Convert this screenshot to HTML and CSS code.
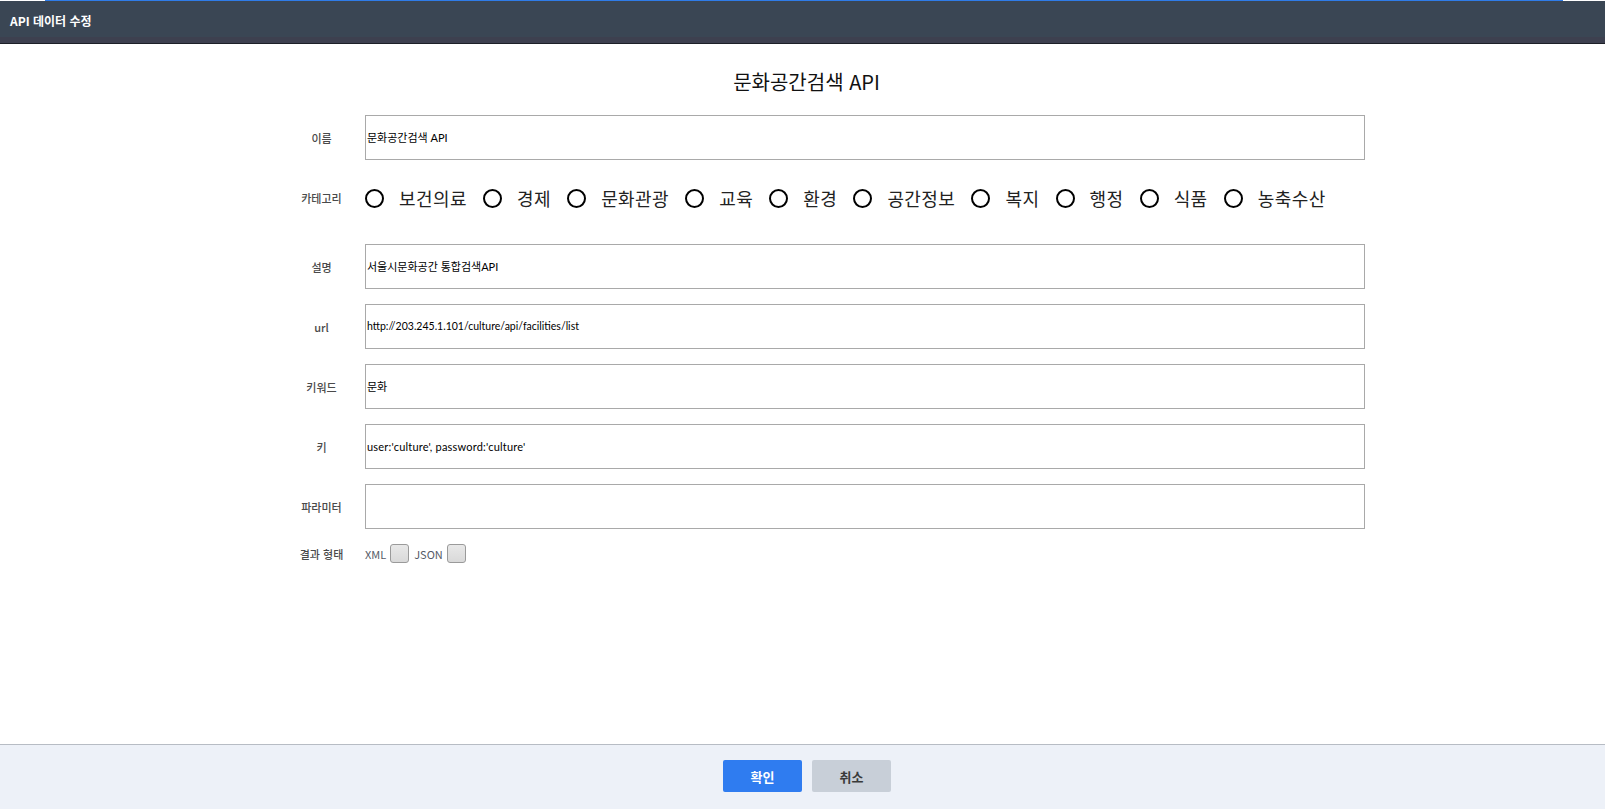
FILE: index.html
```html
<!DOCTYPE html>
<html lang="ko">
<head>
<meta charset="utf-8">
<title>API 데이터 수정</title>
<link rel="stylesheet" href="styles.css">
</head>
<body>
<div class="app">
  <div class="topline"><div class="tabline"></div></div>
  <header class="hdr">
    <div class="hdr-main">API 데이터 수정</div>
    <div class="hdr-strip"></div>
  </header>
  <main class="content">
    <h1 class="title">문화공간검색 API</h1>
    <div class="form">
      <div class="row">
        <div class="lbl">이름</div>
        <div class="field">문화공간검색 API</div>
      </div>
      <div class="row row-cat">
        <div class="lbl">카테고리</div>
        <div class="radios">
          <span class="radio"></span><span class="rtext">보건의료</span>
          <span class="radio"></span><span class="rtext">경제</span>
          <span class="radio"></span><span class="rtext">문화관광</span>
          <span class="radio"></span><span class="rtext">교육</span>
          <span class="radio"></span><span class="rtext">환경</span>
          <span class="radio"></span><span class="rtext">공간정보</span>
          <span class="radio"></span><span class="rtext">복지</span>
          <span class="radio"></span><span class="rtext">행정</span>
          <span class="radio"></span><span class="rtext">식품</span>
          <span class="radio"></span><span class="rtext">농축수산</span>
        </div>
      </div>
      <div class="row">
        <div class="lbl">설명</div>
        <div class="field">서울시문화공간 통합검색API</div>
      </div>
      <div class="row gap">
        <div class="lbl">url</div>
        <div class="field field-url">http://203.245.1.101/culture/api/facilities/list</div>
      </div>
      <div class="row gap">
        <div class="lbl">키워드</div>
        <div class="field">문화</div>
      </div>
      <div class="row gap">
        <div class="lbl">키</div>
        <div class="field field-key">user:'culture', password:'culture'</div>
      </div>
      <div class="row gap">
        <div class="lbl">파라미터</div>
        <div class="field"></div>
      </div>
      <div class="row gap row-res">
        <div class="lbl">결과 형태</div>
        <div class="checks">
          <span class="ctext">XML</span><span class="check"></span>
          <span class="ctext ctext2">JSON</span><span class="check"></span>
        </div>
      </div>
    </div>
  </main>
  <footer class="foot">
    <button class="btn btn-ok">확인</button>
    <button class="btn btn-cancel">취소</button>
  </footer>
</div>
</body>
</html>
```
FILE: styles.css
```css
* { box-sizing: border-box; }
html, body { margin: 0; padding: 0; }
body {
  font-family: "Noto Sans CJK KR", "Noto Sans", sans-serif;
  background: #fff;
  color: #222;
}
.app {
  width: 1605px;
  height: 809px;
  display: flex;
  flex-direction: column;
  overflow: hidden;
}
.topline {
  height: 1px;
  background: #fff;
  display: flex;
}
.tabline {
  margin-left: 45px;
  width: 1518px;
  height: 1px;
  background: #2f7ce8;
}
.hdr {
  border-bottom: 1px solid #1c2027;
}
.hdr-main {
  height: 36px;
  background: #3a4654;
  color: #fff;
  font-size: 12px;
  font-weight: bold;
  line-height: 40px;
  padding-left: 10px;
}
.hdr-strip {
  height: 6px;
  background: #3d404f;
}
.content {
  flex: 1;
  padding-top: 24px;
}
.title {
  margin: 0;
  font-size: 20px;
  font-weight: normal;
  line-height: 28px;
  height: 28px;
  text-align: center;
  padding-left: 8px;
  color: #111;
}
.form {
  margin-left: 278px;
  margin-top: 19px;
}
.row {
  display: flex;
  align-items: center;
}
.row.gap { margin-top: 15px; }
.lbl {
  width: 87px;
  text-align: center;
  font-size: 11px;
  color: #4a4a4a;
  font-weight: 500;
}
.field {
  width: 1000px;
  height: 45px;
  border: 1px solid #a9a9a9;
  padding-left: 1px;
  font-family: Lato, "Noto Sans CJK KR", sans-serif;
  font-size: 11px;
  color: #000;
  line-height: 43px;
  white-space: nowrap;
}
.field-url { font-size: 10.5px; }
.field-key { letter-spacing: 0.2px; }
.row-cat {
  height: 60px;
  margin-top: 8px;
  margin-bottom: 16px;
}
.radios {
  display: flex;
  align-items: center;
}
.radio {
  width: 19px;
  height: 19px;
  border: 2px solid #000;
  border-radius: 50%;
  margin-right: 15px;
}
.rtext {
  font-size: 18px;
  letter-spacing: 0.4px;
  color: #222;
  margin-right: 16.2px;
  line-height: 24px;
}
.row-res { height: 19px; }
.checks {
  display: flex;
  align-items: center;
}
.ctext {
  font-size: 11px;
  color: #555a66;
  margin-right: 4px;
}
.ctext2 { margin-left: 5px; margin-right: 4px; }
.check {
  width: 19px;
  height: 19px;
  border: 1px solid #9a9a9a;
  border-radius: 3px;
  background: linear-gradient(#e8e8e8, #d9d9d9);
}
.foot {
  height: 65px;
  border-top: 1px solid #b7bcc4;
  background: #edf1f8;
  display: flex;
  justify-content: center;
  align-items: flex-start;
  padding-top: 15px;
  padding-left: 9px;
  gap: 10px;
}
.btn {
  width: 79px;
  height: 32px;
  border: none;
  border-radius: 2px;
  font-family: "Noto Sans CJK KR", sans-serif;
  font-size: 13px;
  font-weight: bold;
  cursor: pointer;
}
.btn-ok { background: #2f7cf0; color: #fff; }
.btn-cancel { background: #c8cfd8; color: #3a3a3a; }
```
